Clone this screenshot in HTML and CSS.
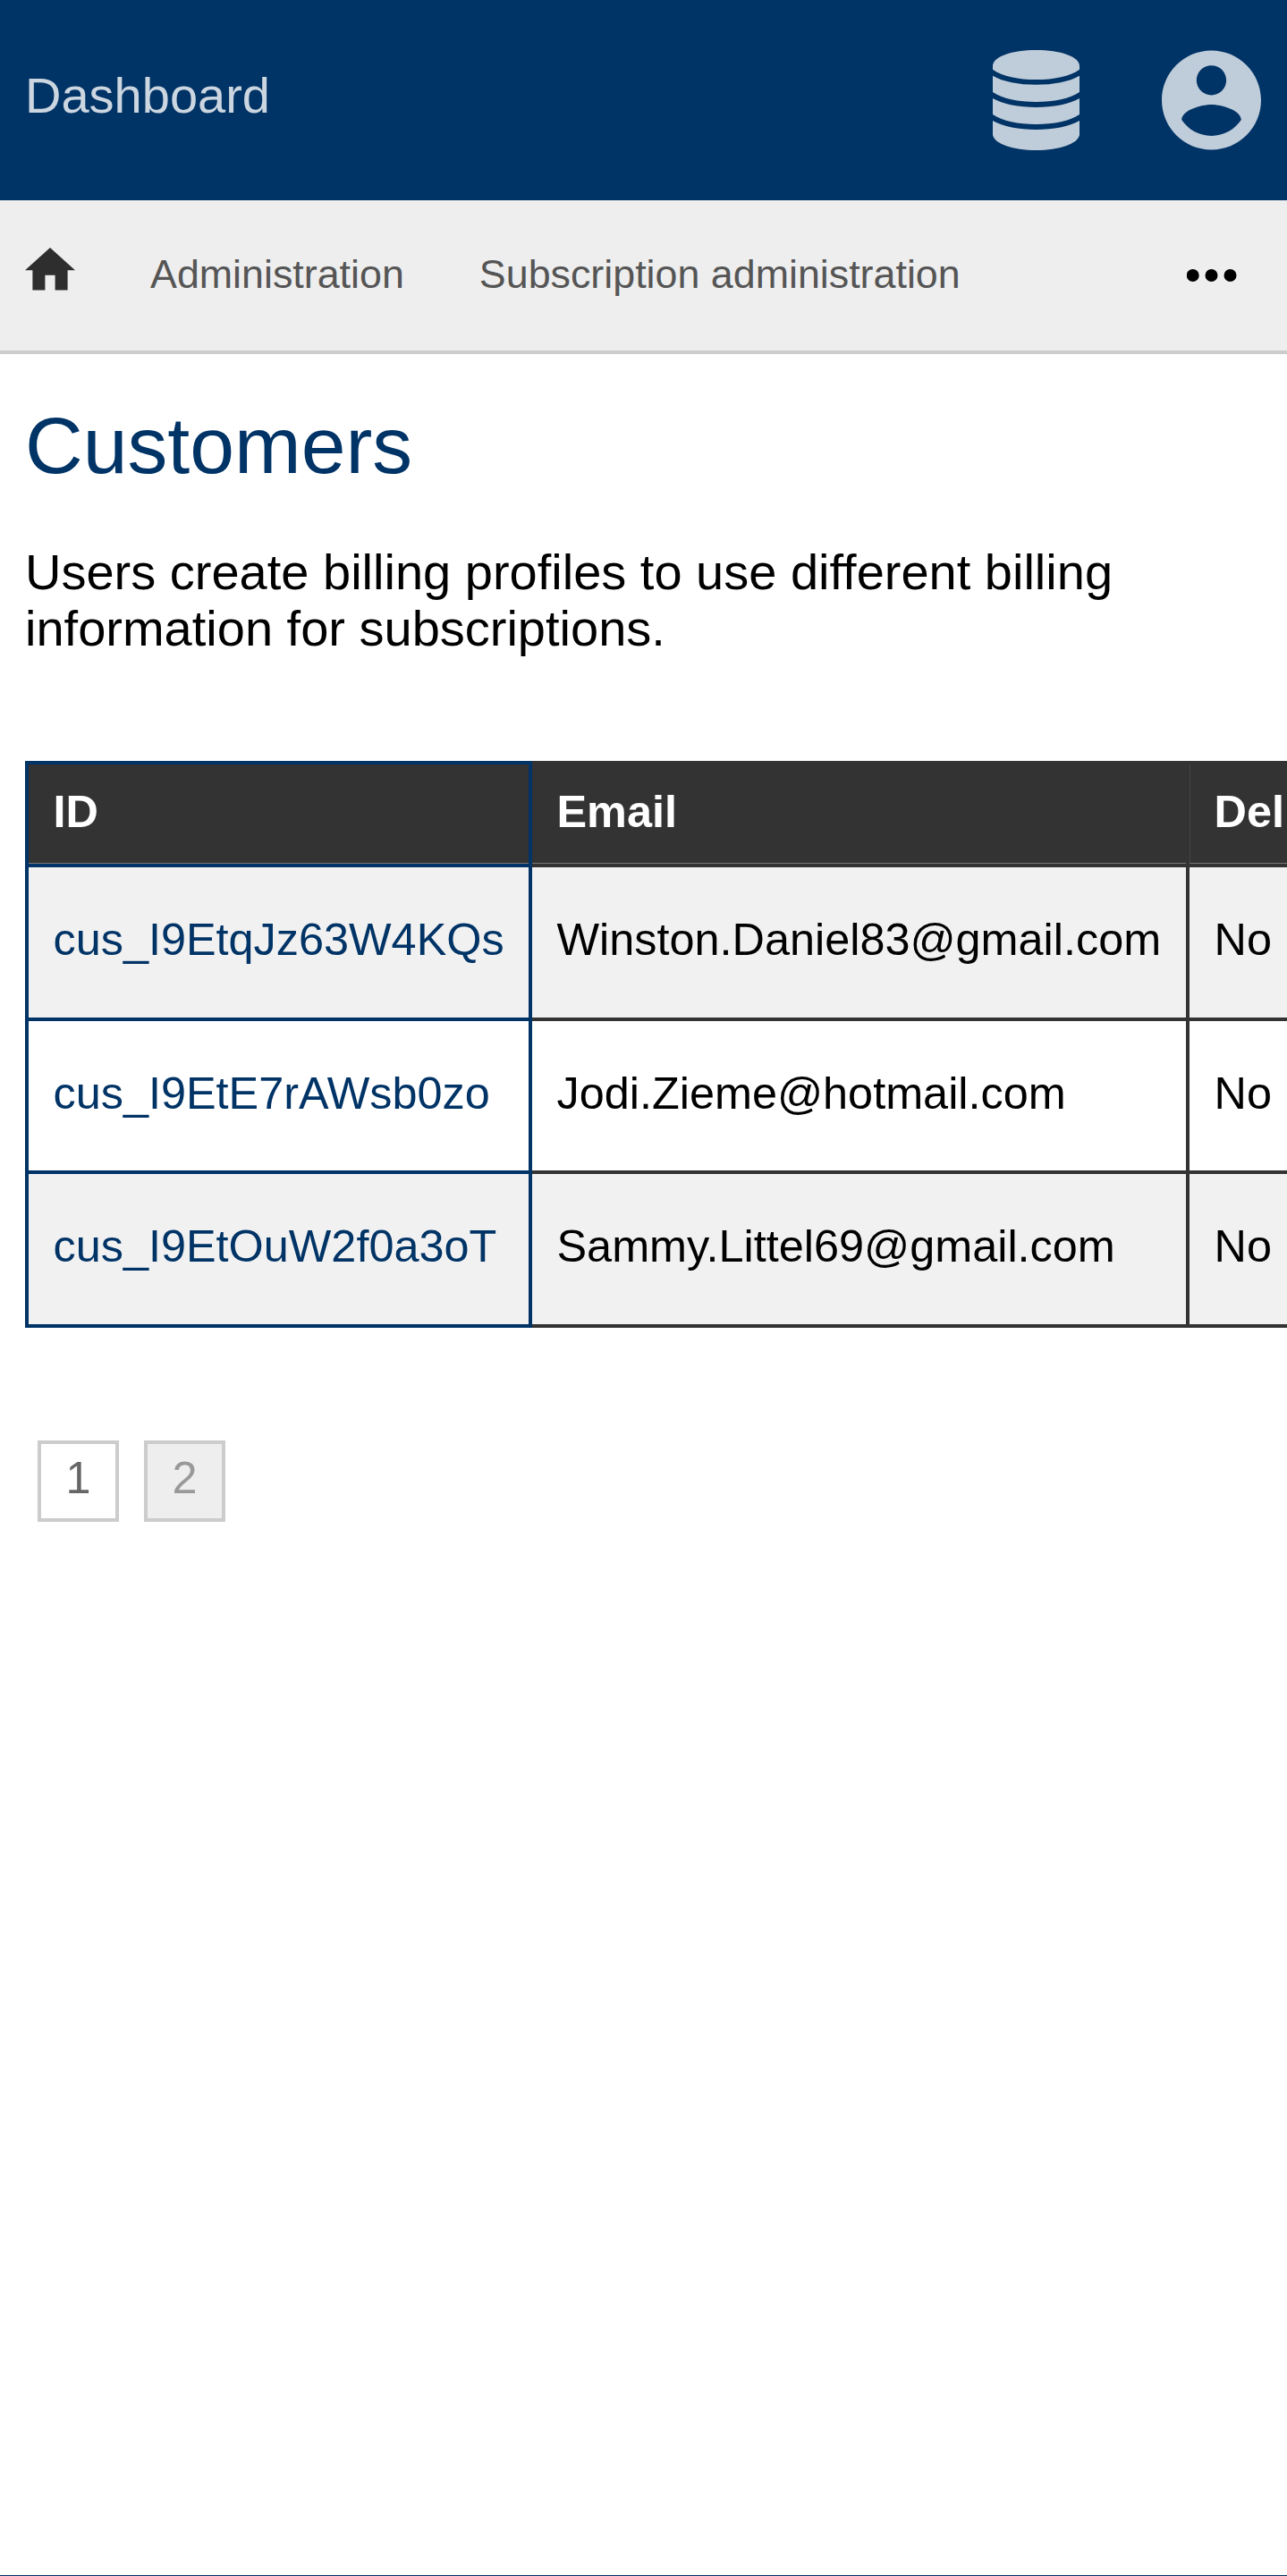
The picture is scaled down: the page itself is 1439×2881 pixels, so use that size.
FILE: index.html
```html
<!DOCTYPE html>
<html lang="en">
<head>
<meta charset="utf-8">
<title>Customers</title>
<link rel="stylesheet" href="styles.css">
</head>
<body>
<div class="page">
  <header class="header">
    <a class="brand">Dashboard</a>
    <div class="header-menus">
      <svg class="icon-database" viewBox="0 0 291 336" aria-hidden="true">
        <path d="M0 53C0 22 65 0 145.500 0S291 22 291 53V65C260 88 204 99 145.500 99S31 88 0 65Z"/>
        <path d="M0 86C34 106 88 116 145.500 116S257 106 291 86V141C260 163 204 174 145.500 174S31 163 0 141Z"/>
        <path d="M0 162C34 182 88 192 145.500 192S257 182 291 162V216C260 238 204 249 145.500 249S31 238 0 216Z"/>
        <path d="M0 237C34 257 88 267 145.500 267S257 257 291 237V285C285 315 223 336 145.500 336S6 315 0 285Z"/>
      </svg>
      <svg class="icon-account" viewBox="2 2 20 20" aria-hidden="true">
        <path d="M12 2C6.480 2 2 6.480 2 12s4.480 10 10 10 10-4.480 10-10S17.520 2 12 2zm0 3c1.660 0 3 1.340 3 3s-1.340 3-3 3-3-1.340-3-3 1.340-3 3-3zm0 14.200c-2.500 0-4.710-1.280-6-3.220.03-1.990 4-3.080 6-3.080 1.990 0 5.970 1.090 6 3.080-1.290 1.940-3.500 3.220-6 3.220z"/>
      </svg>
    </div>
  </header>
  <nav class="nav">
    <svg class="icon-home" viewBox="2 3 20 17" aria-hidden="true"><path d="M10 20v-6h4v6h5v-8h3L12 3 2 12h3v8z"/></svg>
    <a class="nav-link">Administration</a>
    <a class="nav-link">Subscription administration</a>
    <svg class="icon-more" viewBox="0 0 56 14" aria-hidden="true"><circle cx="6.700" cy="7" r="7"/><circle cx="27.500" cy="7" r="7"/><circle cx="48.500" cy="7" r="7"/></svg>
  </nav>
  <main class="content">
    <h1 class="title">Customers</h1>
    <p class="intro">Users create billing profiles to use different billing information for subscriptions.</p>
    <table class="customers">
      <colgroup><col class="col-id"><col class="col-email"><col class="col-status"></colgroup>
      <thead>
        <tr><th>ID</th><th>Email</th><th>Del</th></tr>
      </thead>
      <tbody>
        <tr><td><a>cus_I9EtqJz63W4KQs</a></td><td>Winston.Daniel83@gmail.com</td><td>No</td></tr>
        <tr><td><a>cus_I9EtE7rAWsb0zo</a></td><td>Jodi.Zieme@hotmail.com</td><td>No</td></tr>
        <tr><td><a>cus_I9EtOuW2f0a3oT</a></td><td>Sammy.Littel69@gmail.com</td><td>No</td></tr>
      </tbody>
    </table>
    <div class="pagination">
      <a class="page-link">1</a>
      <a class="page-link page-link-current">2</a>
    </div>
  </main>
</div>
</body>
</html>
```
FILE: styles.css
```css
* { box-sizing: border-box; }

html { background: #003366; }

body {
  margin: 0;
  font-family: "Liberation Sans", Arial, sans-serif;
  font-size: 56px;
  color: #000;
}

.page {
  width: 100%;
  height: 2880px;
  overflow: hidden;
  background: #fff;
}

.header {
  display: flex;
  align-items: center;
  justify-content: space-between;
  height: 224px;
  padding: 0 29px 0 28px;
  background: #003366;
}

.brand {
  padding-bottom: 11px;
  line-height: 64px;
  color: #ccd6e0;
}

.header-menus {
  display: flex;
  gap: 92px;
  fill: #bfccd9;
}

.icon-database { width: 97px; height: 112px; }
.icon-account { width: 111px; height: 112px; }

.nav {
  display: flex;
  align-items: center;
  gap: 84px;
  height: 172px;
  padding: 0 56px 4px 28px;
  border-bottom: 4px solid #ccc;
  background: #eee;
  font-size: 44.8px;
  line-height: 52px;
}

.icon-home {
  width: 56px;
  height: 47.6px;
  margin-bottom: 10px;
  fill: #2e2e2e;
}

.nav-link { color: #555; }

.icon-more {
  width: 56px;
  height: 14px;
  margin: 4px 0 0 auto;
  fill: #000;
}

.content { padding: 50px 28px 0; }

.title {
  margin: 0;
  font-size: 89.6px;
  font-weight: 400;
  line-height: 104px;
  color: #003366;
}

.intro {
  margin: 58px 0 117px;
  line-height: 63px;
}

.customers {
  width: 1698px;
  border-collapse: collapse;
  table-layout: fixed;
  font-size: 50.4px;
  line-height: 57px;
  white-space: nowrap;
}

.col-id { width: 563px; }
.col-email { width: 735px; }
.col-status { width: 400px; }

.customers th,
.customers td {
  padding: 0 27.5px 6px;
  border: 4px solid #333;
  text-align: left;
}

.customers th {
  height: 115px;
  background: #333;
  box-shadow: inset 0 -1px #777;
  color: #fff;
}

.customers th:last-child { box-shadow: inset 0 -1px #777, inset 1px 0 #444; }

.customers td {
  height: 171.5px;
  background: #fff;
}

.customers th:first-child,
.customers td:first-child { border-color: #003366; }

.customers tbody tr:nth-child(odd) td { background: #f1f1f1; }

.customers a { color: #003366; }

.pagination {
  display: flex;
  gap: 28px;
  margin: 126px 14px 0;
}

.page-link {
  display: flex;
  justify-content: center;
  width: 91px;
  height: 91px;
  border: 4px solid #ccc;
  background: #fff;
  font-size: 50.4px;
  line-height: 76px;
  color: #666;
}

.page-link-current {
  background: #eee;
  color: #999;
}
```
